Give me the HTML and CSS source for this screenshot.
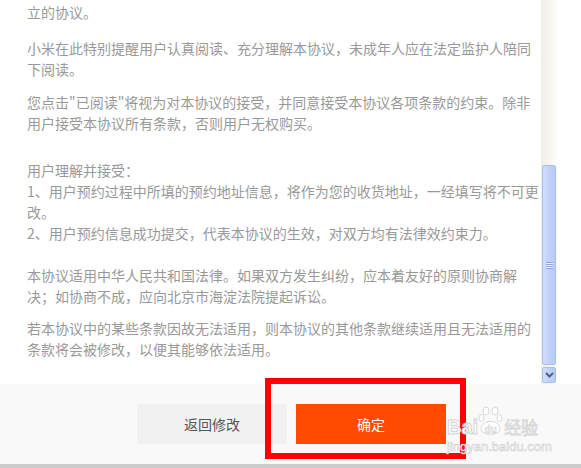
FILE: index.html
```html
<!DOCTYPE html>
<html lang="zh-CN">
<head>
<meta charset="utf-8">
<title>协议</title>
<link rel="stylesheet" href="styles.css">
</head>
<body>
<div class="page">
  <div class="main">
    <div class="text">
      <p class="p1">立的协议。</p>
      <p class="p2">小米在此特别提醒用户认真阅读、充分理解本协议，未成年人应在法定监护人陪同下阅读。</p>
      <p class="p3">您点击"已阅读"将视为对本协议的接受，并同意接受本协议各项条款的约束。除非用户接受本协议所有条款，否则用户无权购买。</p>
      <p class="p4">用户理解并接受：<br>1、用户预约过程中所填的预约地址信息，将作为您的收货地址，一经填写将不可更改。<br>2、用户预约信息成功提交，代表本协议的生效，对双方均有法律效约束力。</p>
      <p class="p5">本协议适用中华人民共和国法律。如果双方发生纠纷，应本着友好的原则协商解决；如协商不成，应向北京市海淀法院提起诉讼。</p>
      <p class="p6">若本协议中的某些条款因故无法适用，则本协议的其他条款继续适用且无法适用的条款将会被修改，以便其能够依法适用。</p>
    </div>
    <div class="scrollbar">
      <div class="thumb"><span class="grip"></span></div>
      <div class="down">
        <svg width="9" height="6" viewBox="0 0 9 6"><path d="M1 1 L4.5 4.5 L8 1" fill="none" stroke="#4d6185" stroke-width="2"/></svg>
      </div>
    </div>
  </div>
  <div class="footer">
    <button class="btn btn-back">返回修改</button>
    <button class="btn btn-ok">确定</button>
  </div>
  <div class="band"></div>
  <div class="highlight"></div>
  <div class="watermark">
    <div class="wm-logo">
      <span class="wm-bai">Bai</span>
      <span class="wm-paw">
        <svg width="25" height="30" viewBox="0 0 25 30">
          <g fill="#fff" stroke="#d8d8d8" stroke-width="1">
            <ellipse cx="8" cy="5" rx="3" ry="4"/>
            <ellipse cx="17" cy="5" rx="3" ry="4"/>
            <ellipse cx="3.5" cy="12" rx="2.5" ry="3.5"/>
            <ellipse cx="21.5" cy="12" rx="2.5" ry="3.5"/>
            <path d="M3 23 C3 13 22 13 22 23 C22 30 3 30 3 23 Z"/>
          </g>
          <text x="12.5" y="27" text-anchor="middle" font-family="Liberation Sans, sans-serif" font-weight="bold" font-size="10" fill="#fff" stroke="#d0d0d0" stroke-width="0.6">du</text>
        </svg>
      </span>
      <span class="wm-jy">经验</span>
    </div>
    <div class="wm-url">jingyan.baidu.com</div>
  </div>
</div>
</body>
</html>
```

FILE: styles.css
```css
html, body {
  margin: 0;
  padding: 0;
  background: #fff;
}
.page {
  position: relative;
  width: 581px;
  height: 468px;
  overflow: hidden;
  font-family: "Noto Sans CJK SC", "Microsoft YaHei", sans-serif;
}
.main {
  height: 384px;
  display: flex;
  background: #fff;
}
.text {
  flex: 1;
  overflow: hidden;
  padding: 2px 0 0 27px;
  font-size: 14px;
  line-height: 21px;
  color: #999;
}
.text p {
  margin: 0 0 12px;
}
.text .p1 { margin-bottom: 15px; }
.text .p3 { margin-bottom: 26px; }
.text .p4 { margin-bottom: 21px; }
.text .p5 { margin-bottom: 11px; }

.scrollbar {
  width: 16px;
  margin-right: 24px;
  display: flex;
  flex-direction: column;
  background: linear-gradient(to right, #efeee7, #f7f6f1 60%, #fdfdfb);
}
.thumb {
  margin: 165px 1px 0;
  height: 200px;
  box-sizing: border-box;
  border: 1px solid #a9bde9;
  border-radius: 2px;
  background: linear-gradient(to right, #d2defc, #c3d4fb 40%, #b8cbf7);
  display: flex;
  align-items: center;
  justify-content: center;
}
.grip {
  width: 7px;
  height: 7px;
  background: repeating-linear-gradient(to bottom, #8ea7e2 0, #8ea7e2 1px, #e6edfd 1px, #e6edfd 2px);
}
.down {
  margin: auto 1px 1px;
  height: 16px;
  box-sizing: border-box;
  border: 1px solid #a9bde9;
  border-radius: 2px;
  background: linear-gradient(to right, #d2defc, #c3d4fb 40%, #b8cbf7);
  display: flex;
  align-items: center;
  justify-content: center;
}
.footer {
  height: 80px;
  background: #f9f9f9;
  display: flex;
  align-items: center;
  justify-content: center;
  gap: 9px;
  padding-left: 2px;
}
.btn {
  width: 150px;
  height: 40px;
  border: 0;
  padding: 0;
  font-family: "Noto Sans CJK SC", "Microsoft YaHei", sans-serif;
  font-size: 14px;
  cursor: pointer;
}
.btn-back {
  background: #f1f1f1;
  color: #555;
}
.btn-ok {
  background: #ff4a00;
  color: #fff;
}
.band {
  height: 4px;
  background: #cbcbcb;
}
.highlight {
  position: absolute;
  left: 265px;
  top: 378px;
  width: 201px;
  height: 81px;
  box-sizing: border-box;
  border: 6px solid #ff0000;
}
.watermark {
  position: absolute;
  left: 447px;
  top: 405px;
  width: 110px;
}
.wm-logo {
  display: flex;
  align-items: flex-end;
  height: 31px;
  white-space: nowrap;
}
.wm-bai {
  font-family: "Liberation Sans", sans-serif;
  font-weight: bold;
  font-size: 20px;
  line-height: 18px;
  color: #fff;
  -webkit-text-stroke: 1px #d4d4d4;
}
.wm-paw {
  display: inline-flex;
  margin: 0 1px 0 0;
}
.wm-jy {
  font-size: 17px;
  line-height: 19px;
  color: #fff;
  -webkit-text-stroke: 0.8px #d4d4d4;
}
.wm-url {
  font-family: "Liberation Sans", sans-serif;
  font-size: 13px;
  line-height: 15px;
  color: #fff;
  -webkit-text-stroke: 0.6px #d0d0d0;
  margin-top: 3px;
  white-space: nowrap;
}
```
